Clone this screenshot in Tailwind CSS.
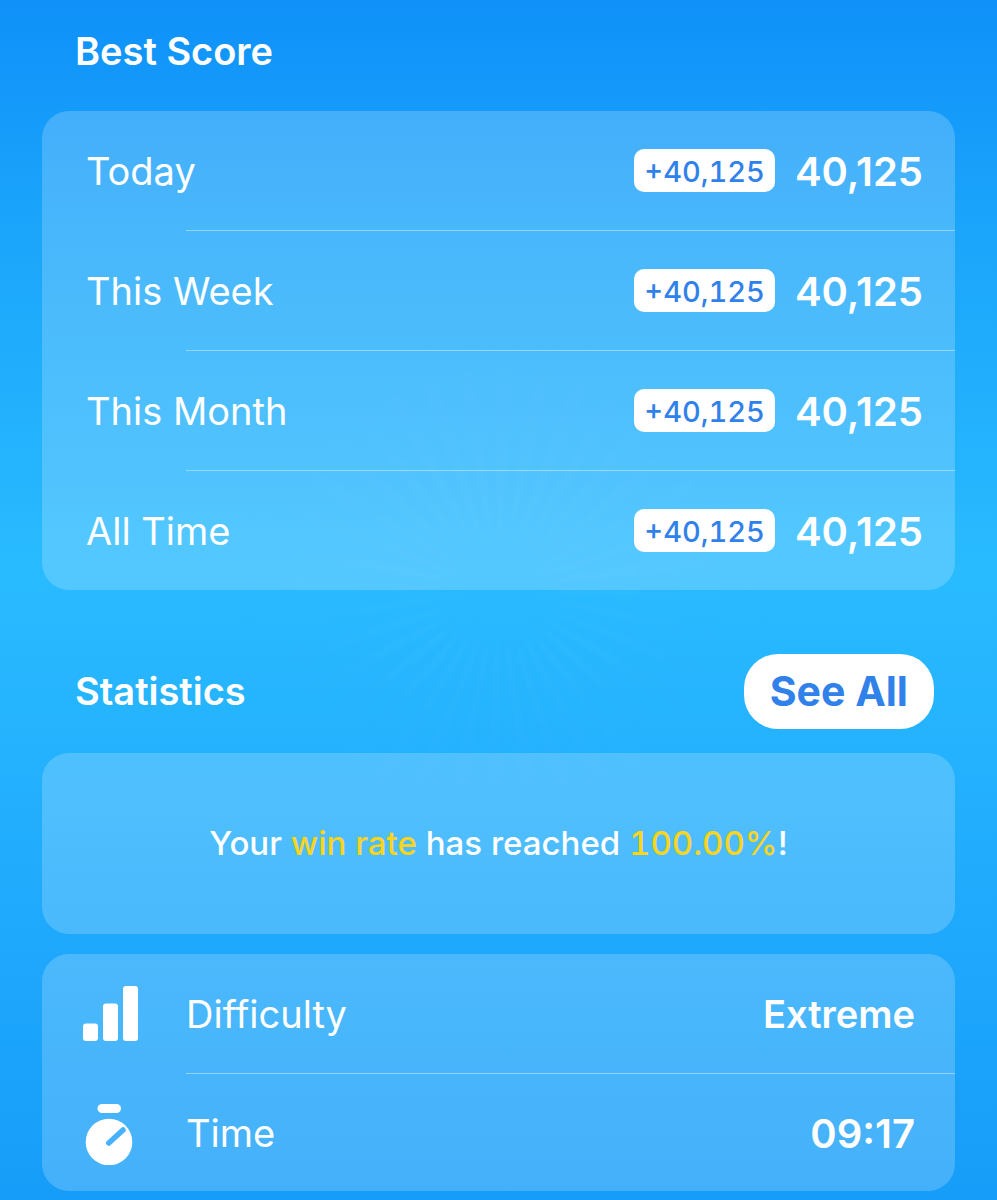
<!DOCTYPE html>
<html lang="en">
<head>
  <meta charset="UTF-8" />
  <meta name="viewport" content="width=device-width, initial-scale=1.0" />
  <title>Best Score | Statistics</title>
  <script src="https://cdn.jsdelivr.net/npm/@tailwindcss/browser@4"></script>
</head>
<body class="min-h-screen bg-[linear-gradient(to_bottom,#0f91f9_0px,#1ba5fb_230px,#29bbff_570px,#20aafd_900px,#169df9_1200px)] font-[Inter,sans-serif] text-white">

<main class="relative px-[42px] pb-2">

  <!-- Sunburst behind the cards -->
  <div class="absolute inset-0 bg-[repeating-conic-gradient(from_0deg_at_50%_590px,rgba(255,255,255,0.018)_0deg_3deg,transparent_5deg_8deg,rgba(255,255,255,0.018)_10deg)] [mask-image:radial-gradient(circle_at_50%_590px,transparent_20px,black_80px,transparent_280px)]"></div>

  <!-- Best score -->
  <section class="relative pt-7">
    <h2 class="pl-[33px] mb-9 text-[38px] leading-[47px] font-semibold">Best Score</h2>

    <ul class="rounded-[27px] bg-white/20">
      <li>
        <div class="flex items-center h-[119px] pl-11 pr-8">
          <span class="flex-1 pt-0.5 text-[38px] font-normal">Today</span>
          <span class="rounded-[10px] bg-white px-[10px] pt-0.5 mr-5 text-[29px] leading-[41px] font-medium tabular-nums text-[#3181ea]">+40,125</span>
          <span class="pt-0.5 text-[40px] font-semibold">40,125</span>
        </div>
        <div class="ml-36 h-px bg-white/40"></div>
      </li>
      <li>
        <div class="flex items-center h-[119px] pl-11 pr-8">
          <span class="flex-1 pt-0.5 text-[38px] font-normal">This Week</span>
          <span class="rounded-[10px] bg-white px-[10px] pt-0.5 mr-5 text-[29px] leading-[41px] font-medium tabular-nums text-[#3181ea]">+40,125</span>
          <span class="pt-0.5 text-[40px] font-semibold">40,125</span>
        </div>
        <div class="ml-36 h-px bg-white/40"></div>
      </li>
      <li>
        <div class="flex items-center h-[119px] pl-11 pr-8">
          <span class="flex-1 pt-0.5 text-[38px] font-normal">This Month</span>
          <span class="rounded-[10px] bg-white px-[10px] pt-0.5 mr-5 text-[29px] leading-[41px] font-medium tabular-nums text-[#3181ea]">+40,125</span>
          <span class="pt-0.5 text-[40px] font-semibold">40,125</span>
        </div>
        <div class="ml-36 h-px bg-white/40"></div>
      </li>
      <li>
        <div class="flex items-center h-[119px] pl-11 pr-8">
          <span class="flex-1 pt-0.5 text-[38px] font-normal">All Time</span>
          <span class="rounded-[10px] bg-white px-[10px] pt-0.5 mr-5 text-[29px] leading-[41px] font-medium tabular-nums text-[#3181ea]">+40,125</span>
          <span class="pt-0.5 text-[40px] font-semibold">40,125</span>
        </div>
      </li>
    </ul>
  </section>

  <!-- Statistics -->
  <section class="relative pt-16">
    <div class="flex items-center justify-between pl-[33px] pr-[21px] mb-6">
      <h2 class="text-[38px] leading-[47px] font-semibold">Statistics</h2>
      <button type="button" class="rounded-[34px] bg-white px-[26px] text-[41px] leading-[75px] font-bold text-[#3181ea] cursor-pointer">See All</button>
    </div>

    <div class="flex items-center justify-center h-[181px] rounded-[27px] bg-white/20">
      <p class="text-[33px] font-medium tabular-nums">Your <span class="text-[#fbd41d]">win rate</span> has reached <span class="text-[#fbd41d]">100.00%</span>!</p>
    </div>

    <ul class="mt-5 rounded-[27px] bg-white/20">
      <li>
        <div class="flex items-center h-[119px] pl-10 pr-10">
          <svg class="w-[58px] h-[60px] mr-[46px]" viewBox="0 0 58 60" fill="currentColor" aria-hidden="true">
            <rect x="1" y="39.500" width="15" height="17.500" rx="3" />
            <rect x="21" y="19.500" width="15" height="37.500" rx="3" />
            <rect x="41" y="2" width="15" height="55" rx="3" />
          </svg>
          <span class="flex-1 pt-0.5 text-[38px] font-normal">Difficulty</span>
          <span class="pt-0.5 text-[38px] font-semibold">Extreme</span>
        </div>
        <div class="ml-36 h-px bg-white/40"></div>
      </li>
      <li>
        <div class="flex items-center h-[117px] pl-10 pr-10">
          <svg class="w-[58px] h-[64px] mr-[46px]" viewBox="0 0 58 64" fill="currentColor" aria-hidden="true">
            <rect x="15.500" y="3" width="23.500" height="9" rx="4.500" />
            <circle cx="27" cy="41" r="23.300" />
            <path d="M26.800 42 L41 29" fill="none" stroke="#47b2fb" stroke-width="5.500" stroke-linecap="round" />
          </svg>
          <span class="flex-1 pt-0.5 text-[38px] font-normal">Time</span>
          <span class="pt-0.5 text-[40px] font-semibold">09:17</span>
        </div>
      </li>
    </ul>
  </section>

</main>

</body>
</html>
